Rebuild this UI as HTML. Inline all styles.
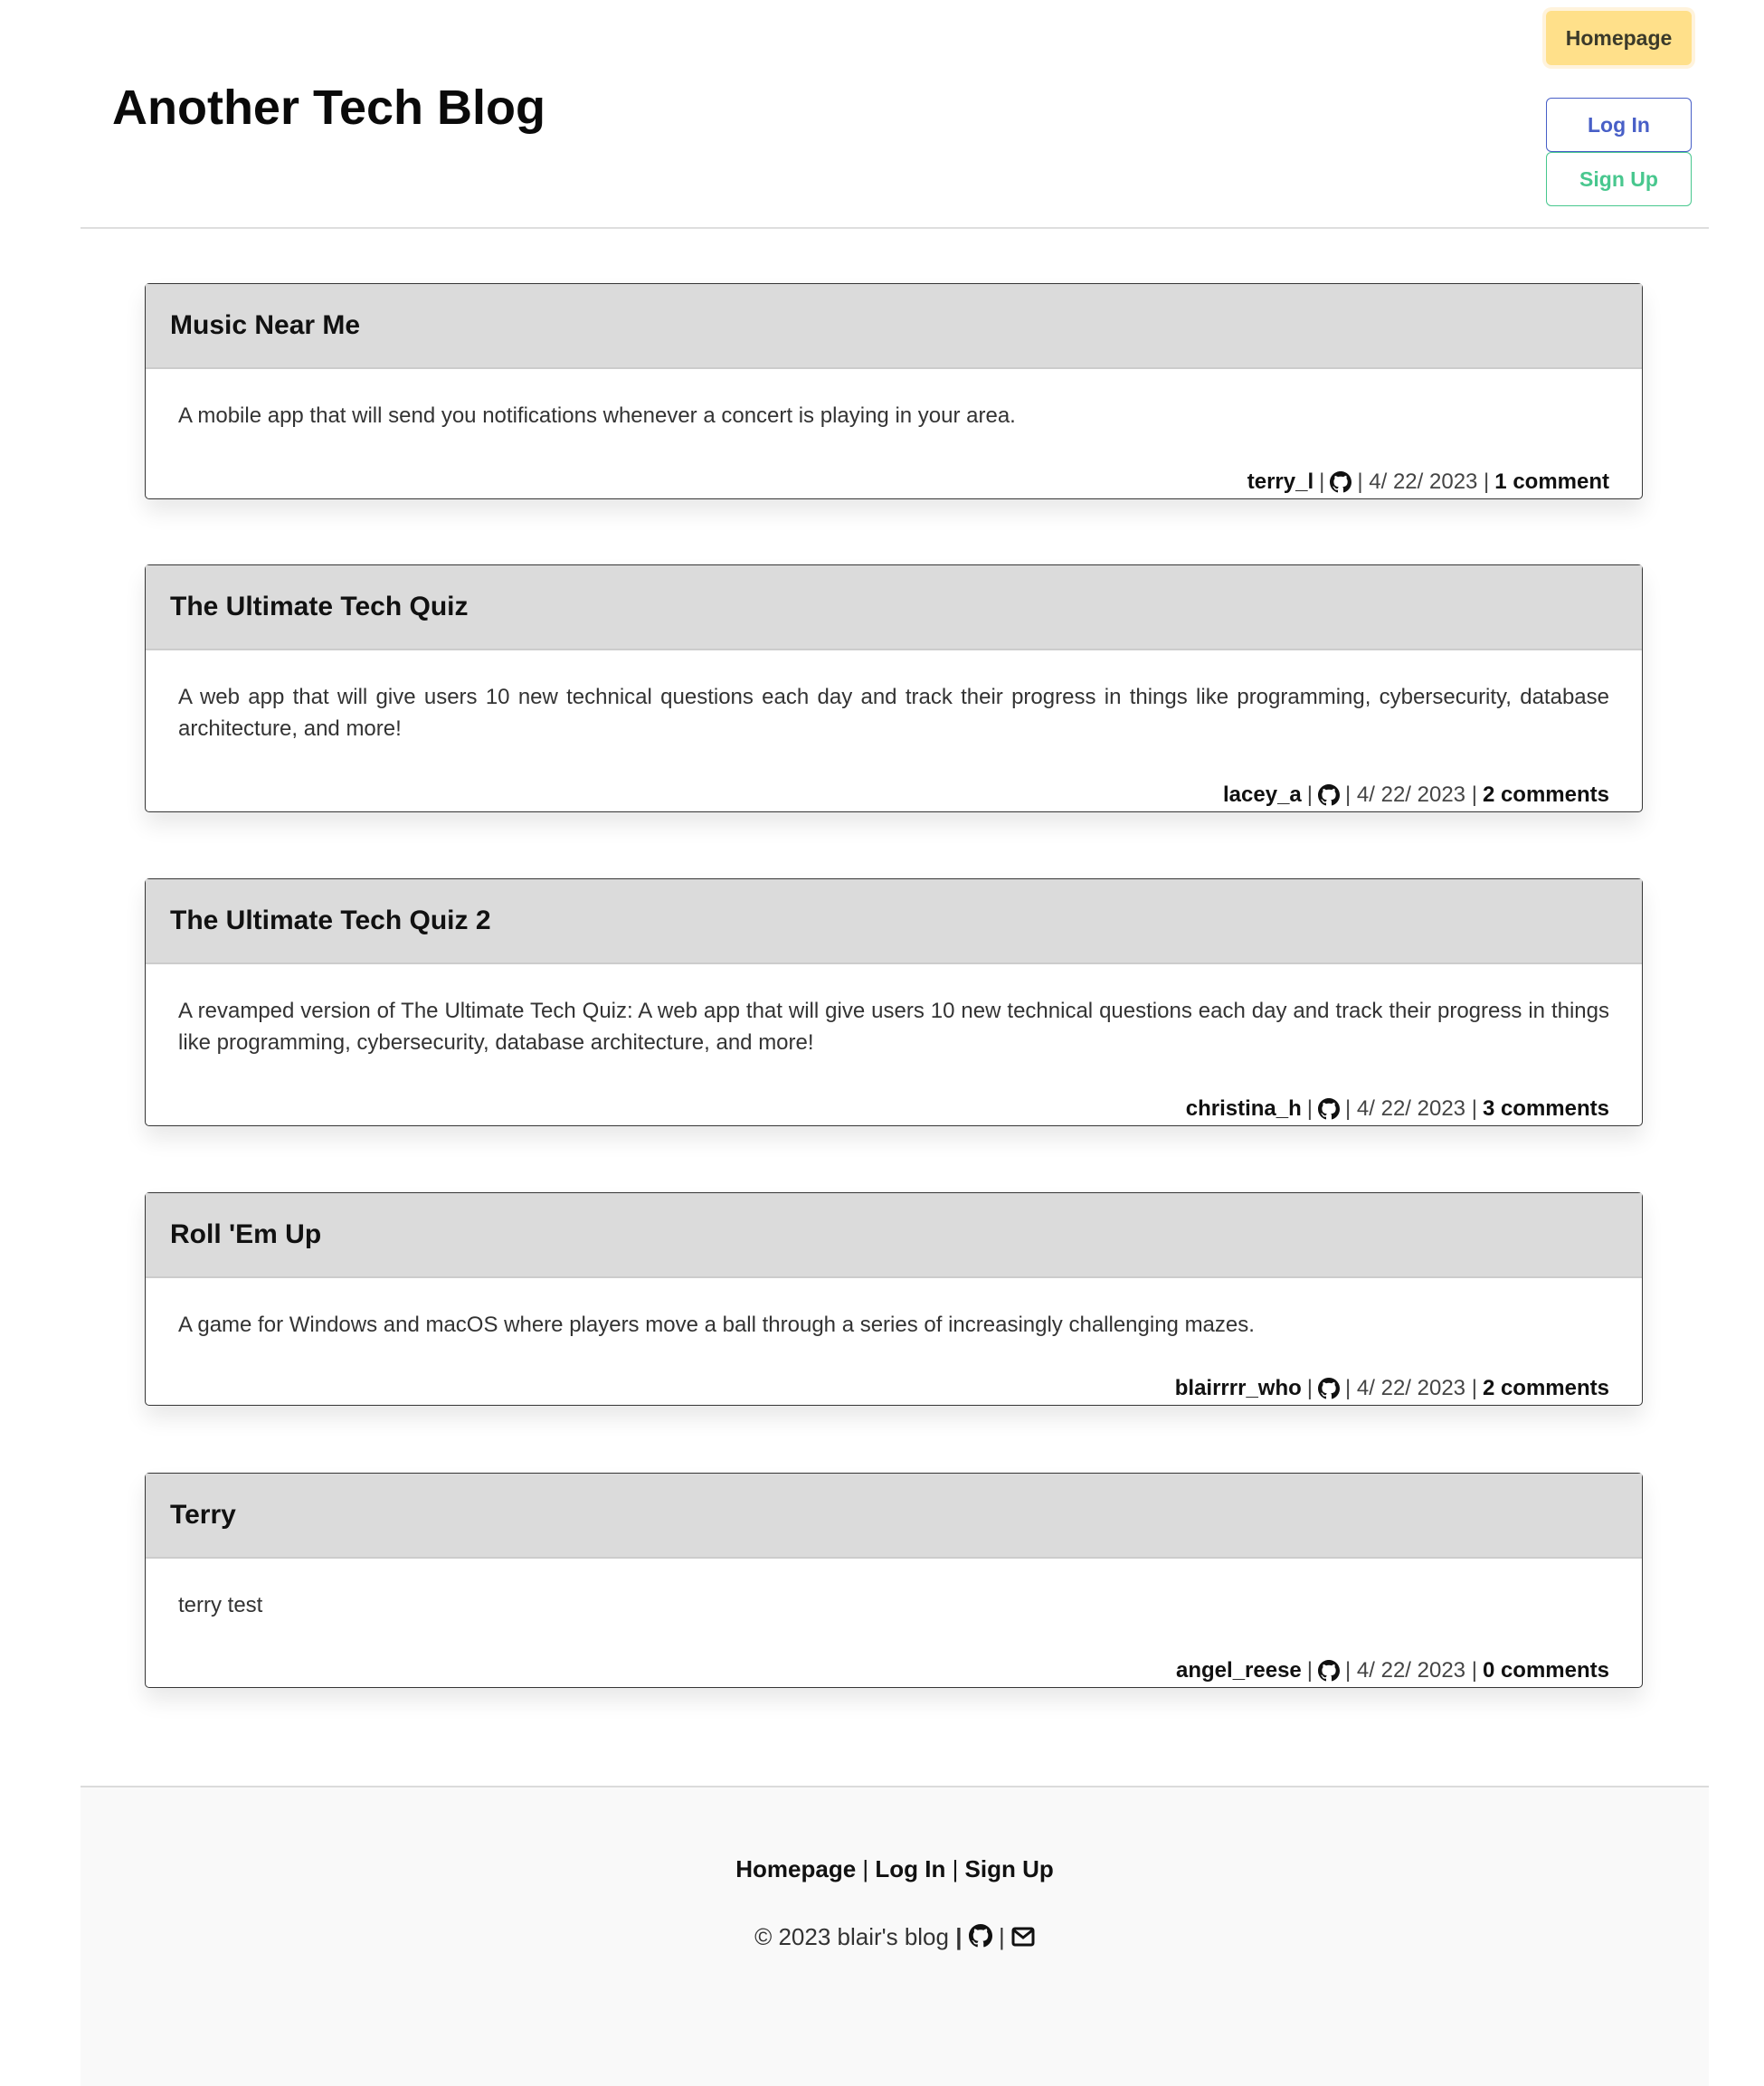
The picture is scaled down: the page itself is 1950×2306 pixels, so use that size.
<!DOCTYPE html>
<html><head><meta charset="utf-8"><style>
*{box-sizing:border-box;margin:0;padding:0}
body{width:1950px;height:2306px;background:#fff;font-family:"Liberation Sans",Arial,sans-serif;position:relative;overflow:hidden;color:#4a4a4a}
h1{position:absolute;left:124px;top:88px;font-size:54px;font-weight:bold;color:#0a0a0a}
.btn{position:absolute;left:1709px;width:161px;height:60px;border-radius:6px;font-weight:bold;font-size:23px;display:flex;align-items:center;justify-content:center;background:#fff}
.hp{top:12px;background:#ffe08a;color:#3b3a2a;box-shadow:0 0 0 4px #fff3dc}
.li{top:108px;border:1.5px solid #485fc7;color:#485fc7}
.su{top:168px;border:1.5px solid #48c78e;color:#48c78e}
.hr{position:absolute;left:89px;width:1800px;top:251px;border-top:2px solid #dedede}
.card{position:absolute;left:160px;width:1656px;border:1.5px solid #363636;border-radius:5px;box-shadow:0 14px 24px rgba(0,0,0,.09);background:#fff}
.ch{height:94px;background:#dbdbdb;border-bottom:2px solid #ccc;padding-left:27px;display:flex;align-items:center;font-size:30px;font-weight:bold;color:#111}
.cb{padding:34px 36px 0 36px;font-size:24px;line-height:35px;text-align:justify;color:#333}
.meta{position:absolute;right:36px;bottom:1px;font-size:24px;line-height:35px;color:#444;display:flex;align-items:center;gap:6px}
.meta b{color:#111}
.gh{width:24px;height:24px;vertical-align:middle}
.foot{position:absolute;left:89px;width:1800px;top:1974px;height:332px;background:#f9f9f9;border-top:2px solid #dbdbdb;text-align:center}
.fl{position:absolute;top:75px;width:100%;font-size:26px;color:#111}
.fc{position:absolute;top:150px;width:100%;font-size:26px;color:#333}
</style></head><body>
<h1>Another Tech Blog</h1>
<div class="btn hp">Homepage</div>
<div class="btn li">Log In</div>
<div class="btn su">Sign Up</div>
<div class="hr"></div>

<svg width="0" height="0" style="position:absolute"><defs><symbol id="g" viewBox="0 0 16 16"><path fill="#111" d="M8 0C3.58 0 0 3.58 0 8c0 3.54 2.290 6.530 5.470 7.590.4.070.55-.170.55-.380 0-.19-.01-.82-.01-1.49-2.010.37-2.530-.49-2.690-.94-.09-.23-.48-.94-.82-1.130-.28-.15-.68-.52-.01-.53.63-.01 1.080.58 1.230.82.72 1.210 1.870.87 2.330.66.07-.52.28-.87.51-1.070-1.780-.2-3.640-.89-3.640-3.950 0-.87.31-1.590.82-2.150-.08-.2-.36-1.020.08-2.120 0 0 .67-.21 2.200.82.64-.18 1.320-.27 2-.27.68 0 1.360.09 2 .27 1.530-1.040 2.200-.82 2.200-.82.44 1.100.16 1.920.08 2.120.51.56.82 1.270.82 2.150 0 3.070-1.870 3.750-3.650 3.950.29.25.54.73.54 1.480 0 1.070-.01 1.930-.01 2.200 0 .21.15.46.55.38A8.013 8.013 0 0016 8c0-4.420-3.580-8-8-8z"/></symbol></defs></svg>

<div class="card" style="top:313px;height:239px"><div class="ch">Music Near Me</div><div class="cb">A mobile app that will send you notifications whenever a concert is playing in your area.</div><div class="meta"><b>terry_l</b> | <svg class="gh"><use href="#g"/></svg> | 4/ 22/ 2023 | <b>1 comment</b></div></div>

<div class="card" style="top:624px;height:274px"><div class="ch">The Ultimate Tech Quiz</div><div class="cb">A web app that will give users 10 new technical questions each day and track their progress in things like programming, cybersecurity, database architecture, and more!</div><div class="meta"><b>lacey_a</b> | <svg class="gh"><use href="#g"/></svg> | 4/ 22/ 2023 | <b>2 comments</b></div></div>

<div class="card" style="top:971px;height:274px"><div class="ch">The Ultimate Tech Quiz 2</div><div class="cb">A revamped version of The Ultimate Tech Quiz: A web app that will give users 10 new technical questions each day and track their progress in things like programming, cybersecurity, database architecture, and more!</div><div class="meta"><b>christina_h</b> | <svg class="gh"><use href="#g"/></svg> | 4/ 22/ 2023 | <b>3 comments</b></div></div>

<div class="card" style="top:1318px;height:236px"><div class="ch">Roll 'Em Up</div><div class="cb">A game for Windows and macOS where players move a ball through a series of increasingly challenging mazes.</div><div class="meta"><b>blairrrr_who</b> | <svg class="gh"><use href="#g"/></svg> | 4/ 22/ 2023 | <b>2 comments</b></div></div>

<div class="card" style="top:1628px;height:238px"><div class="ch">Terry</div><div class="cb">terry test</div><div class="meta"><b>angel_reese</b> | <svg class="gh"><use href="#g"/></svg> | 4/ 22/ 2023 | <b>0 comments</b></div></div>

<div class="foot">
<div class="fl"><b>Homepage</b> | <b>Log In</b> | <b>Sign Up</b></div>
<div class="fc">© 2023 blair's blog <b>|</b> <svg style="width:26px;height:26px;vertical-align:-3px"><use href="#g"/></svg> | <svg width="26" height="22" viewBox="0 0 26 22" style="vertical-align:-2px"><rect x="2" y="2" width="22" height="18" rx="2" fill="none" stroke="#111" stroke-width="3"/><path d="M3 4l10 8 10-8" fill="none" stroke="#111" stroke-width="3"/></svg></div>
</div>
</body></html>
